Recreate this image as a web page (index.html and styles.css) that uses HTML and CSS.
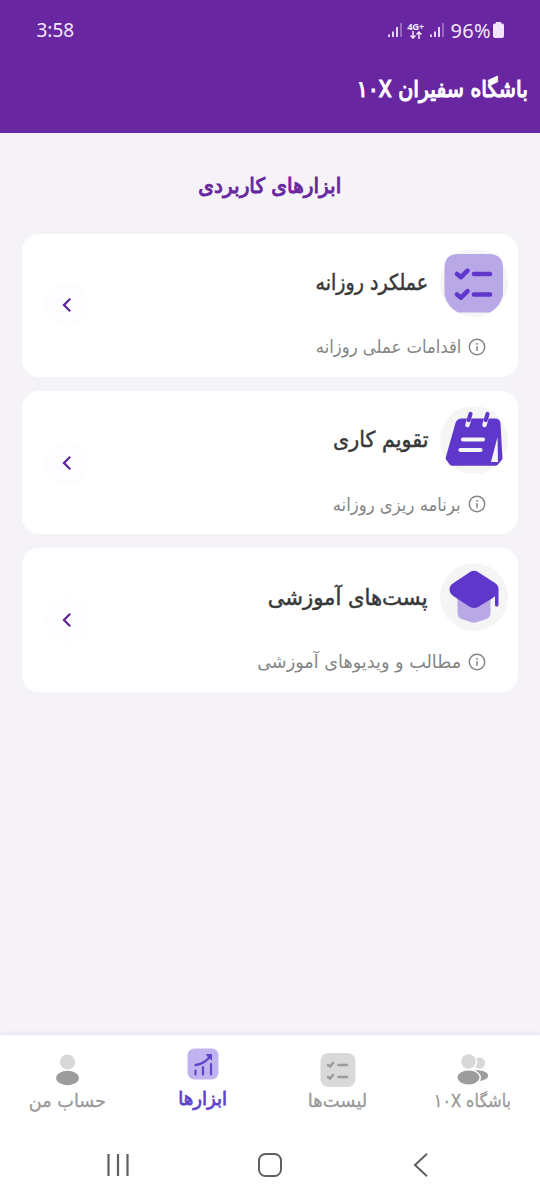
FILE: index.html
```html
<!DOCTYPE html>
<html lang="fa" dir="rtl">
<head>
<meta charset="utf-8">
<meta name="viewport" content="width=device-width">
<title>باشگاه سفیران</title>
<link rel="stylesheet" href="styles.css">
</head>
<body>
<svg class="defs" width="0" height="0" aria-hidden="true">
  <symbol id="signal" viewBox="0 0 14 16"><path d="M1 15v-2.500M5 15V9.500M9 15V5" stroke="currentColor" stroke-width="1.800"/><path d="M13 15V1" stroke="currentColor" stroke-width="1.400" opacity=".5"/></symbol>
  <symbol id="info" viewBox="0 0 18 18"><circle cx="9" cy="9" r="7.700" fill="none" stroke="currentColor" stroke-width="1.500"/><path d="M9 8.200v4.600M9 5v1.700" stroke="currentColor" stroke-width="1.600"/></symbol>
  <symbol id="chevron" viewBox="0 0 10 16"><path d="M8.200 1.800 2 8l6.200 6.200" fill="none" stroke="currentColor" stroke-width="2.300"/></symbol>
</svg>
<header class="header">
  <div class="status" dir="ltr">
    <span class="clock">3:58</span>
    <div class="indicators">
      <svg width="14" height="16"><use href="#signal"/></svg>
      <span class="network"><span class="network-type">4G+</span>
        <svg width="12" height="8" viewBox="0 0 12 8"><path d="M3 0v7M.5 4.500 3 7l2.500-2.500M9 8V1M6.500 3.500 9 1l2.500 2.500" fill="none" stroke="currentColor" stroke-width="1.500"/></svg></span>
      <svg width="14" height="16"><use href="#signal"/></svg>
      <span class="percent">96%</span>
      <svg width="11" height="16" viewBox="0 0 11 16"><path d="M3.500 0h4q.7 0 .7.700V1.500h1Q11 1.500 11 3.500v10.500q0 2-2 2H2q-2 0-2-2V3.500q0-2 1.800-2h1V.7q0-.7.7-.7z" fill="currentColor"/></svg>
    </div>
  </div>
  <h1 class="app-title"><span class="fit">باشگاه سفیران <bdi dir="ltr" class="tenx">۱۰X</bdi></span></h1>
</header>
<main class="content">
  <h2 class="section-title"><span>ابزارهای کاربردی</span></h2>
  <div class="cards">
    <article class="card">
      <div class="card-body">
        <div class="card-head">
          <span class="badge"><svg width="68" height="68" viewBox="0 0 68 68"><path d="M18 5h31q14 0 14 14v27q-3 12-13 17.500H18Q7.500 58 4.500 46V19Q4.500 5 18 5z" fill="#b9a8e6"/><path d="M34 25h16M34 45.500h16" stroke="#5f38cb" stroke-width="4.600" stroke-linecap="round"/><path d="m17 25 4 3.200 6.500-6.500M17 45.500l4 3.200 6.500-6.500" fill="none" stroke="#5f38cb" stroke-width="4.600" stroke-linecap="round" stroke-linejoin="round"/></svg></span>
          <h3 class="card-title t1">عملکرد روزانه</h3>
        </div>
        <div class="card-note"><svg width="18" height="18"><use href="#info"/></svg><span class="note n1">اقدامات عملی روزانه</span></div>
      </div>
      <span class="go"><svg width="10" height="16"><use href="#chevron"/></svg></span>
    </article>
    <article class="card">
      <div class="card-body">
        <div class="card-head">
          <span class="badge"><svg width="68" height="68" viewBox="0 0 68 68"><path d="M22 12.500h33q5 0 5.500 5L62.500 53l-5 6q-1 .8-2 .8H12q-1 0-2-.8l-4-5.500q-.8-1 0-3L15.500 17q1.500-4.500 6.500-4.500z" fill="#5f38cb"/><path d="m57.500 31 .5 25h-7z" fill="#f5f4f6"/><path d="m30.500 8-3 11M47.500 8l-3 11" stroke="#f5f4f6" stroke-width="4.500" stroke-linecap="round"/><path d="m30.500 8-1.800 6M47.500 8l-1.800 6" stroke="#5f38cb" stroke-width="4.200" stroke-linecap="round"/><path d="M23 33.500h20M20.500 44h20" stroke="#f5f4f6" stroke-width="4.200" stroke-linecap="round"/></svg></span>
          <h3 class="card-title t2">تقویم کاری</h3>
        </div>
        <div class="card-note"><svg width="18" height="18"><use href="#info"/></svg><span class="note n2">برنامه ریزی روزانه</span></div>
      </div>
      <span class="go"><svg width="10" height="16"><use href="#chevron"/></svg></span>
    </article>
    <article class="card">
      <div class="card-body">
        <div class="card-head">
          <span class="badge"><svg width="68" height="68" viewBox="0 0 68 68"><path d="M17.500 30h33v20q0 4-4 6l-10 3.300q-2.500.7-5 0l-10-3.300q-4-2-4-6z" fill="#b9a8e6"/><path d="M30 9q4-2.500 8 0l17 11q3.500 2.500 3.500 6v16q0 1.500-1.800 1.500T55 42v-9q-1 1-3 2.500L38 44q-4 2-8 0L14 33.500q-4.500-3-4.500-7t4-6.500z" fill="#5f38cb"/></svg></span>
          <h3 class="card-title t3">پست‌های آموزشی</h3>
        </div>
        <div class="card-note"><svg width="18" height="18"><use href="#info"/></svg><span class="note n3">مطالب و ویدیوهای آموزشی</span></div>
      </div>
      <span class="go"><svg width="10" height="16"><use href="#chevron"/></svg></span>
    </article>
  </div>
</main>
<footer class="footer">
  <nav class="tabs">
    <a class="tab"><svg width="36" height="36" viewBox="0 0 36 36"><ellipse cx="24.500" cy="11" rx="5.700" ry="5.500" fill="#d8d8d8"/><ellipse cx="22.500" cy="23.700" rx="10.700" ry="5.500" fill="#9c9c9c"/><circle cx="13.500" cy="9.500" r="8.800" fill="#fff"/><ellipse cx="13.500" cy="25.500" rx="12.500" ry="8.200" fill="#fff"/><circle cx="13.500" cy="9.500" r="7.300" fill="#d8d8d8"/><ellipse cx="13.500" cy="25.500" rx="11" ry="7" fill="#9c9c9c"/></svg><span class="label l1">باشگاه <bdi dir="ltr" class="tenx">۱۰X</bdi></span></a>
    <a class="tab"><svg width="36" height="36" viewBox="0 0 36 36"><rect x=".5" y="1" width="35" height="34" rx="8" fill="#d9d9d9"/><path d="M18.500 13H27M18.500 25H27" stroke="#9c9c9c" stroke-width="2.600" stroke-linecap="round"/><path d="m8 13 2 1.500 3-3.500M8 25l2 1.500 3-3.500" fill="none" stroke="#9c9c9c" stroke-width="2.600" stroke-linecap="round"/></svg><span class="label l2">لیست‌ها</span></a>
    <a class="tab active"><svg width="32" height="32" viewBox="0 0 32 32"><rect x=".5" y=".5" width="31" height="31" rx="7" fill="#c1b3f0"/><path d="M8.500 22.500v4M16 19v7.500M24 16v10.500" stroke="#5f44cb" stroke-width="2.200" stroke-linecap="round"/><path d="M8.500 17q9-1 15-9" fill="none" stroke="#5f44cb" stroke-width="2.300" stroke-linecap="round"/><path d="M19.500 6.500h5v5.500l-2-2-2-2z" fill="#5f44cb" stroke="#5f44cb" stroke-width="1" stroke-linejoin="round"/></svg><span class="label l3">ابزارها</span></a>
    <a class="tab"><svg width="36" height="36" viewBox="0 0 36 36"><circle cx="17.500" cy="10" r="7.600" fill="#d8d8d8"/><ellipse cx="17.500" cy="26" rx="11.400" ry="7.200" fill="#9c9c9c"/></svg><span class="label l4">حساب من</span></a>
  </nav>
  <div class="system" dir="ltr">
    <svg width="24" height="24" viewBox="0 0 24 24"><path d="M2.500 1v22M12 1v22M21.500 1v22" stroke="#606060" stroke-width="2.200"/></svg>
    <svg width="24" height="24" viewBox="0 0 24 24"><rect x="1" y="1" width="22" height="22" rx="6.500" fill="none" stroke="#606060" stroke-width="2"/></svg>
    <svg width="24" height="24" viewBox="0 0 24 24"><path d="M18 .8 6 12l12 11.200" fill="none" stroke="#606060" stroke-width="2"/></svg>
  </div>
</footer>
</body>
</html>
```
FILE: styles.css
```css
* { box-sizing: border-box; }
body {
  margin: 0;
  width: 540px;
  height: 1200px;
  display: flex;
  flex-direction: column;
  background: #f5f3f8;
  font-family: "DejaVu Sans", sans-serif;
  overflow: hidden;
}
svg { display: block; flex: none; }
.defs { position: absolute; }
h1, h2, h3 { margin: 0; font-weight: 400; white-space: nowrap; }
.header {
  height: 132.500px;
  background: #6827a1;
  color: #fff;
}
.status {
  height: 60px;
  padding: 0 36px 0 36.500px;
  display: flex;
  align-items: center;
  justify-content: space-between;
  color: #f2e6fb;
  font-family: "Noto Sans", sans-serif;
  font-size: 19px;
}
.indicators { display: flex; align-items: center; }
.network {
  width: 17px;
  margin: 0 5.500px 0 5.500px;
  display: flex;
  flex-direction: column;
  align-items: center;
}
.network-type { font-size: 9.500px; line-height: 9px; font-weight: 700; letter-spacing: -.3px; }
.percent { margin: 0 2px 0 7px; font-size: 20px; letter-spacing: .3px; }
.app-title {
  height: 58px;
  padding-right: 12px;
  display: flex;
  align-items: center;
  font-size: 23px;
  -webkit-text-stroke: 1.200px #fff;
}
.fit { transform: scaleX(.892); transform-origin: right; }
.tenx { font-family: Roboto, "DejaVu Sans", sans-serif; }
.content { flex: 1; }
.section-title {
  height: 101px;
  padding-top: 5px;
  display: flex;
  align-items: center;
  justify-content: center;
  color: #6827a1;
  font-size: 21px;
  -webkit-text-stroke: 1px #6827a1;
}
.section-title span { transform: scaleX(.955); }
.cards {
  padding: 0 22px;
  display: flex;
  flex-direction: column;
  gap: 13.900px;
}
.card {
  height: 143.500px;
  display: flex;
  align-items: center;
  justify-content: space-between;
  border-radius: 17px;
  background: #fff;
}
.card-body { height: 100%; padding: 15px 10px 0 0; }
.card-head { height: 68px; display: flex; align-items: center; gap: 12px; }
.badge { width: 68px; height: 68px; border-radius: 50%; background: #f5f5f6; }
.card-title {
  color: #383838;
  font-size: 22px;
  -webkit-text-stroke: .5px #383838;
  transform-origin: right;
}
.t1 { transform: scaleX(.865); }
.t2 { transform: scaleX(.94); }
.t3 { transform: scaleX(.96); }
.card-note {
  height: 60.500px;
  padding-right: 22px;
  display: flex;
  align-items: center;
  gap: 7px;
  color: #858585;
}
.note { font-size: 18px; white-space: nowrap; transform-origin: right; }
.n1 { transform: scaleX(.913); }
.n2 { transform: scaleX(.916); }
.n3 { transform: scaleX(.98); }
.go {
  width: 44px;
  height: 44px;
  margin-left: 22.500px;
  display: grid;
  place-items: center;
  border-radius: 50%;
  background: #fdfdff;
  color: #5f2799;
}
.footer {
  height: 165px;
  background: #fff;
  box-shadow: 0 -1px 5px rgba(60, 40, 90, .09);
}
.tabs { height: 95px; display: flex; }
.tab {
  flex: 1;
  padding-top: 17px;
  display: flex;
  flex-direction: column;
  align-items: center;
  color: #999;
}
.label {
  height: 26px;
  line-height: 26px;
  font-size: 18px;
  white-space: nowrap;
  -webkit-text-stroke: .3px currentColor;
}
.l1 { transform: scaleX(.89); }
.l4 { transform: scaleX(.98); }
.active { padding-top: 13px; color: #5f44cb; }
.active .label { margin-top: 5px; font-size: 19px; -webkit-text-stroke: .8px #5f44cb; transform: scaleX(.95); }
.system {
  height: 70px;
  padding: 0 107px 0 106px;
  display: flex;
  align-items: center;
  justify-content: space-between;
}
```
